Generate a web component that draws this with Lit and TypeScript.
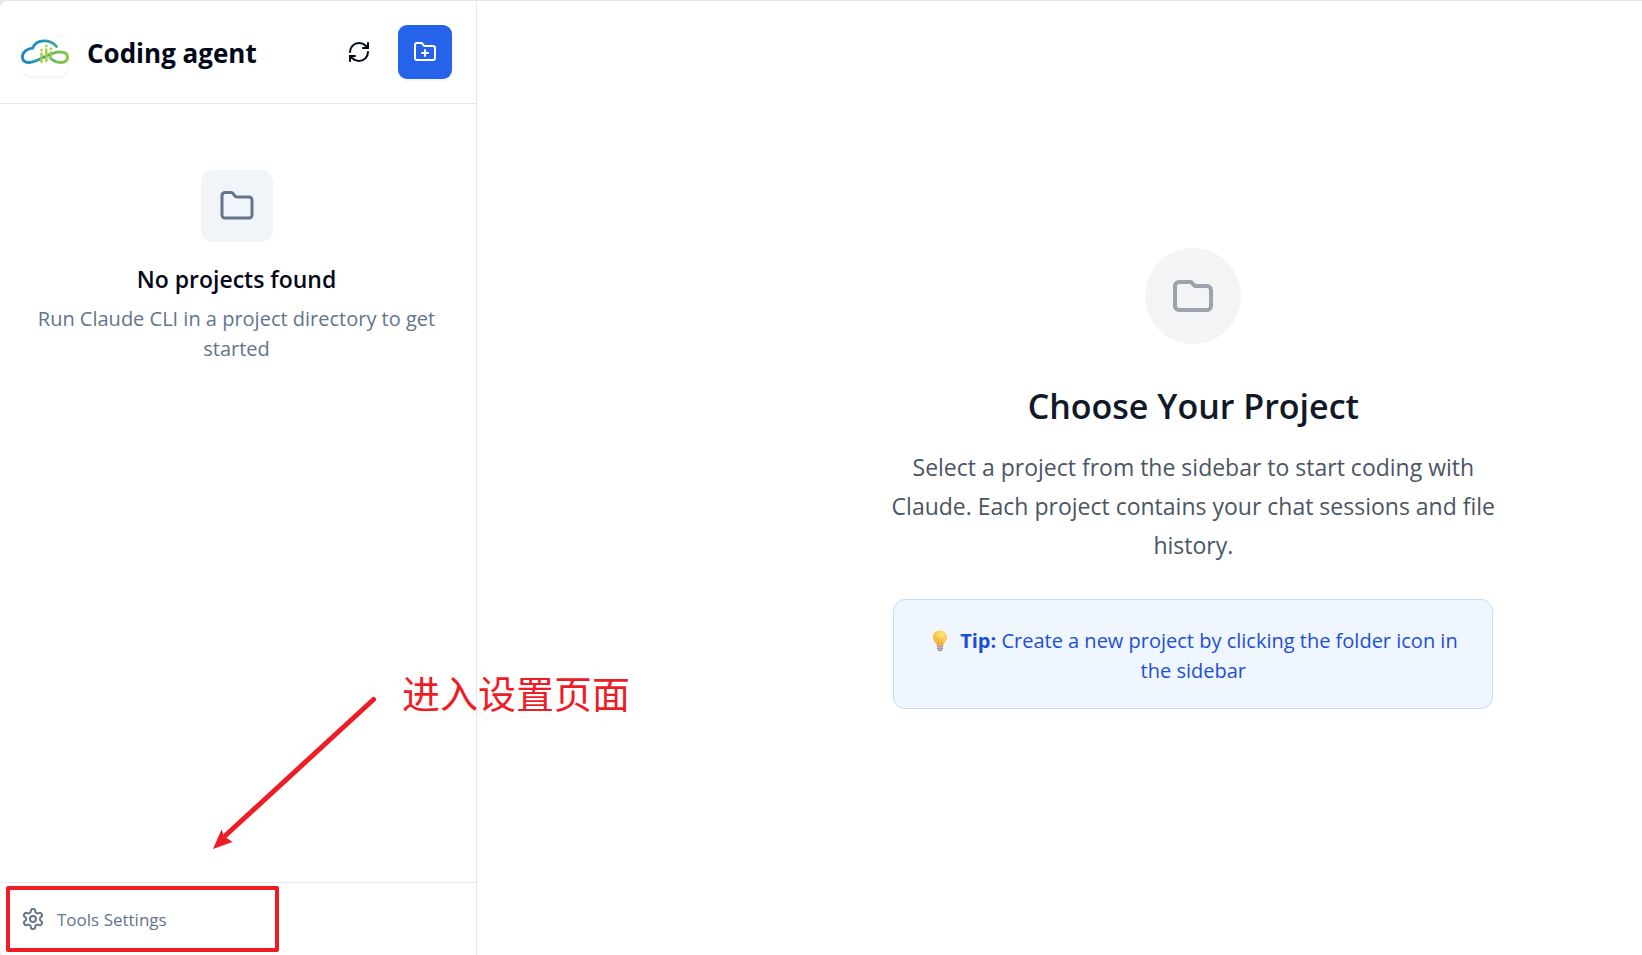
import { LitElement, html, css, svg } from "lit";
import { customElement } from "lit/decorators.js";

const logo = svg`
  <svg class="logo-art" viewBox="0 0 48 48" fill="none" stroke-linecap="round" aria-hidden="true">
    <defs>
      <linearGradient id="cloud" gradientUnits="userSpaceOnUse" x1="1" y1="30" x2="36" y2="15">
        <stop offset="0" stop-color="#1b86c4" />
        <stop offset="0.55" stop-color="#1f8fbd" />
        <stop offset="1" stop-color="#3aa890" />
      </linearGradient>
      <linearGradient id="loop" gradientUnits="userSpaceOnUse" x1="4" y1="34" x2="47" y2="26">
        <stop offset="0" stop-color="#1b86c4" />
        <stop offset="0.45" stop-color="#35a5a5" />
        <stop offset="0.7" stop-color="#6cbd55" />
        <stop offset="1" stop-color="#8cc63f" />
      </linearGradient>
    </defs>
    <path d="M35.400 18.400C32 14.500 27.500 12.900 23 12.900C17.300 12.900 13.400 15.600 11.600 20.200C6 20.600 1.400 24 1.400 28.700C1.400 32.600 4.200 34.500 8 34.500" stroke="url(#cloud)" stroke-width="2.800" />
    <path d="M8 34.500C18 34.500 27 24 39 24C44 24 46.600 26 46.600 29C46.600 32.500 44 34.500 39.500 34.500C35.500 34.500 32.500 33 29 30" stroke="url(#loop)" stroke-width="2.800" />
    <path d="M20.500 25.500V34M25.300 21.500V33M29.800 24.500V30" stroke="#a4cf3c" stroke-width="2.400" />
    <path d="M20.500 22V22.100M25.300 17.800V17.900M29.800 20.800V20.900" stroke="#a4cf3c" stroke-width="2.600" />
  </svg>`;

const refreshIcon = svg`
  <svg class="icon" viewBox="0 0 24 24" aria-hidden="true">
    <path d="M3 12a9 9 0 0 1 9-9 9.750 9.750 0 0 1 6.740 2.740L21 8" />
    <path d="M21 3v5h-5" />
    <path d="M21 12a9 9 0 0 1-9 9 9.750 9.750 0 0 1-6.740-2.740L3 16" />
    <path d="M8 16H3v5" />
  </svg>`;

const folderPath = "M20 20a2 2 0 0 0 2-2V8a2 2 0 0 0-2-2h-7.900a2 2 0 0 1-1.690-.9L9.600 3.900A2 2 0 0 0 7.930 3H4a2 2 0 0 0-2 2v13a2 2 0 0 0 2 2Z";

const folderPlusIcon = svg`
  <svg class="icon" viewBox="0 0 24 24" aria-hidden="true">
    <path d="M12 10v6" />
    <path d="M9 13h6" />
    <path d=${folderPath} />
  </svg>`;

const folderIcon = svg`
  <svg class="icon icon-md" viewBox="0 0 24 24" aria-hidden="true"><path d=${folderPath} /></svg>`;

const folderWideIcon = svg`
  <svg class="icon icon-lg" viewBox="0 0 24 24" aria-hidden="true">
    <path d="M3 7v10a2 2 0 002 2h14a2 2 0 002-2V9a2 2 0 00-2-2h-6l-2-2H5a2 2 0 00-2 2z" />
  </svg>`;

const settingsIcon = svg`
  <svg class="icon" viewBox="0 0 24 24" aria-hidden="true">
    <path d="M12.220 2h-.44a2 2 0 0 0-2 2v.18a2 2 0 0 1-1 1.730l-.43.25a2 2 0 0 1-2 0l-.15-.08a2 2 0 0 0-2.730.73l-.22.38a2 2 0 0 0 .73 2.730l.15.1a2 2 0 0 1 1 1.720v.51a2 2 0 0 1-1 1.740l-.15.09a2 2 0 0 0-.73 2.730l.22.38a2 2 0 0 0 2.730.73l.15-.08a2 2 0 0 1 2 0l.43.25a2 2 0 0 1 1 1.730V20a2 2 0 0 0 2 2h.44a2 2 0 0 0 2-2v-.18a2 2 0 0 1 1-1.730l.43-.25a2 2 0 0 1 2 0l.15.08a2 2 0 0 0 2.730-.73l.22-.39a2 2 0 0 0-.73-2.730l-.15-.08a2 2 0 0 1-1-1.740v-.5a2 2 0 0 1 1-1.740l.15-.09a2 2 0 0 0 .73-2.730l-.22-.38a2 2 0 0 0-2.730-.73l-.15.08a2 2 0 0 1-2 0l-.43-.25a2 2 0 0 1-1-1.730V4a2 2 0 0 0-2-2z" />
    <circle cx="12" cy="12" r="3" />
  </svg>`;

const bulbIcon = svg`
  <svg class="bulb" viewBox="0 0 22 22" aria-hidden="true">
    <defs>
      <radialGradient id="glow" cx="0.6" cy="0.35" r="0.65">
        <stop offset="0" stop-color="#ffe98a" />
        <stop offset="0.6" stop-color="#ffcc4a" />
        <stop offset="1" stop-color="#f9ab3c" />
      </radialGradient>
    </defs>
    <path d="M11 .5C7 .5 4 3.500 4 7.300C4 10.500 6.800 12.200 7.600 15.500H14.400C15.200 12.200 18 10.500 18 7.300C18 3.500 15 .5 11 .5Z" fill="url(#glow)" />
    <path d="M9.800 15L9.400 10.500C8 10 8 8.200 9.300 8.200C10.300 8.200 10.500 9.500 11 9.500S11.700 8.200 12.700 8.200C14 8.200 14 10 12.600 10.500L12.200 15" fill="none" stroke="#f39a2e" stroke-width=".8" />
    <path d="M8 15.500H14V19L12.500 21.300H9.500L8 19Z" fill="#a58aa8" />
    <path d="M8 17.300H14M8.200 19.300H13.800" stroke="#d9c8dc" stroke-width=".8" />
  </svg>`;

@customElement("app-root")
export class AppRoot extends LitElement {
  static styles = css`
    :host {
      display: block;
      font-family: "Open Sans", "Noto Sans", "Noto Sans CJK SC", sans-serif;
      color: #020817;
      background: #e5e7eb;
    }
    * { box-sizing: border-box; }
    h1, h2, h3, p { margin: 0; }
    h1, h2, h3 { font-weight: 600; }
    button { font: inherit; color: inherit; border: 0; background: none; padding: 0; cursor: pointer; }

    .shell {
      display: flex;
      min-height: 100vh;
      background: #fff;
      border-top: 1px solid #e5e5e7;
      border-radius: 8px 0 0 4px;
      overflow: hidden;
    }
    .sidebar {
      position: relative;
      flex: none;
      width: 477px;
      display: flex;
      flex-direction: column;
      border-right: 1px solid #e2e8f0;
    }
    .header {
      display: flex;
      align-items: center;
      gap: 18px;
      padding: 24px 24px 24px 21px;
      border-bottom: 1px solid #e2e8f0;
    }
    .logo {
      width: 48px;
      height: 48px;
      border-radius: 12px;
      box-shadow: 0 2px 3px rgba(0, 0, 0, 0.05);
    }
    .logo-art { display: block; width: 48px; height: 48px; }
    .title { flex: 1; padding-top: 2px; font-size: 26px; line-height: 30px; font-weight: 700; }
    .actions { display: flex; gap: 12px; }
    .action {
      display: grid;
      place-items: center;
      width: 54px;
      height: 54px;
      border-radius: 9px;
    }
    .primary { background: #2563eb; color: #fff; box-shadow: 0 2px 3px rgba(0, 0, 0, 0.05); }

    .icon {
      display: block;
      flex: none;
      width: 24px;
      height: 24px;
      fill: none;
      stroke: currentColor;
      stroke-width: 2;
      stroke-linecap: round;
      stroke-linejoin: round;
    }
    .icon-md { width: 36px; height: 36px; }
    .icon-lg { width: 48px; height: 48px; }

    .empty {
      flex: 1;
      display: flex;
      flex-direction: column;
      align-items: center;
      padding: 66px 24px 24px 21px;
      text-align: center;
    }
    .tile {
      display: grid;
      place-items: center;
      width: 72px;
      height: 72px;
      margin-bottom: 24px;
      border-radius: 12px;
      background: #f1f5f9;
      color: #64748b;
    }
    .empty-title { font-size: 23px; line-height: 27px; margin-bottom: 11px; }
    .empty-text { font-size: 20px; line-height: 30px; color: #64748b; }

    .footer { position: relative; padding: 12px; border-top: 1px solid #e2e8f0; }
    .settings {
      display: flex;
      align-items: center;
      gap: 12px;
      width: 100%;
      height: 48px;
      padding-left: 9px;
      color: #64748b;
      font-size: 17px;
    }
    .highlight {
      position: absolute;
      left: 6px;
      top: 3px;
      width: 273px;
      height: 66px;
      border: 4px solid #ee1c25;
      border-radius: 2px;
      pointer-events: none;
    }
    .arrow { position: absolute; left: 212px; bottom: 106px; width: 166px; height: 154px; }
    .note {
      position: absolute;
      left: 402px;
      bottom: 239px;
      font-family: "Noto Sans CJK SC", sans-serif;
      font-size: 38px;
      line-height: 48px;
      white-space: nowrap;
      color: #ee1c25;
    }

    .main {
      flex: 1;
      display: grid;
      grid-template-columns: 14fr minmax(0, 600px) 5fr;
      align-content: center;
    }
    .welcome {
      grid-column: 2;
      display: flex;
      flex-direction: column;
      align-items: center;
      text-align: center;
    }
    .disc {
      display: grid;
      place-items: center;
      width: 96px;
      height: 96px;
      margin-bottom: 38px;
      border-radius: 50%;
      background: #f3f4f6;
      color: #9ca3af;
    }
    .welcome-title { font-size: 34px; line-height: 48px; margin-bottom: 18px; color: #111827; }
    .welcome-text { font-size: 23px; line-height: 39px; margin: 0 -12px 34px; color: #4b5563; }
    .tip {
      width: 100%;
      padding: 26px 24px 22px;
      border: 1px solid #bfdbfe;
      border-radius: 12px;
      background: #eff6ff;
      color: #1d4ed8;
      font-size: 20px;
      line-height: 30px;
    }
    .bulb { width: 22px; height: 22px; margin-right: 4px; vertical-align: -4px; }
  `;

  render() {
    return html`
      <div class="shell">
        <aside class="sidebar">
          <header class="header">
            <div class="logo">${logo}</div>
            <h1 class="title">Coding agent</h1>
            <div class="actions">
              <button class="action" type="button" aria-label="Refresh">${refreshIcon}</button>
              <button class="action primary" type="button" aria-label="New project">${folderPlusIcon}</button>
            </div>
          </header>
          <section class="empty">
            <div class="tile">${folderIcon}</div>
            <h3 class="empty-title">No projects found</h3>
            <p class="empty-text">Run Claude CLI in a project directory to get started</p>
          </section>
          <footer class="footer">
            <button class="settings" type="button">${settingsIcon}<span>Tools Settings</span></button>
            <div class="highlight"></div>
          </footer>
          <svg class="arrow" viewBox="0 0 166 154" aria-hidden="true">
            <path d="M161.500 4.500L14 140" stroke="#ee1c25" stroke-width="5" stroke-linecap="round" />
            <path d="M1 154L9.500 134.500L12 141L20.500 147Z" fill="#ee1c25" />
          </svg>
          <div class="note">进入设置页面</div>
        </aside>
        <main class="main">
          <section class="welcome">
            <div class="disc">${folderWideIcon}</div>
            <h2 class="welcome-title">Choose Your Project</h2>
            <p class="welcome-text">
              Select a project from the sidebar to start coding with Claude. Each project contains your chat sessions and file history.
            </p>
            <p class="tip">${bulbIcon} <strong>Tip:</strong> Create a new project by clicking the folder icon in the sidebar</p>
          </section>
        </main>
      </div>
    `;
  }
}
